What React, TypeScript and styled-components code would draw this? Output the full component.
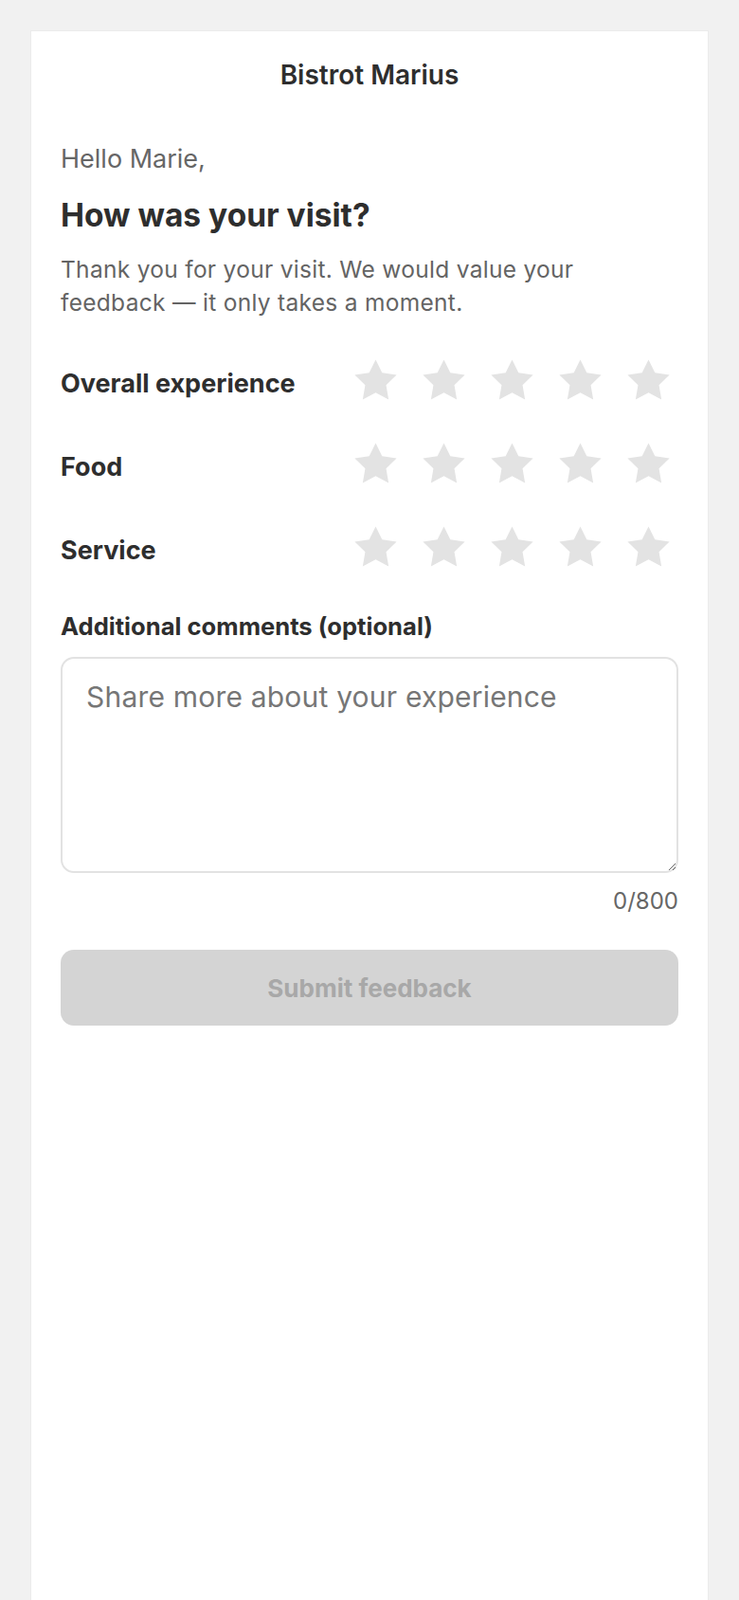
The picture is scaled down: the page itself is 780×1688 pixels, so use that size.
import React, {useState} from 'react';
import styled, {createGlobalStyle} from 'styled-components';

const GlobalStyle = createGlobalStyle`
  * { box-sizing: border-box; }
  body {
    margin: 0;
    background: #f1f1f1;
    font-family: Inter, "Noto Sans", "Liberation Sans", sans-serif;
    color: #2e2e2e;
  }
`;

const Page = styled.div`
  padding: 32px 32px 0;
  min-height: 100vh;
`;

const Card = styled.main`
  max-width: 716px;
  margin: 0 auto;
  min-height: calc(100vh - 32px);
  background: #fff;
  border: 1px solid #ebebeb;
  border-bottom: none;
`;

const Header = styled.header`
  padding: 28px 0 0;
  text-align: center;
  font-size: 28px;
  line-height: 36px;
  font-weight: 600;
  color: #2e2e2e;
`;

const Body = styled.section`
  padding: 53px 31px 0;
`;

const Greeting = styled.p`
  margin: 0;
  font-size: 27px;
  line-height: 36px;
  color: #666;
`;

const Title = styled.h1`
  margin: 21px 0 0;
  font-size: 33.5px;
  line-height: 40px;
  font-weight: 700;
  color: #2e2e2e;
`;

const Intro = styled.p`
  margin: 20px 0 0;
  max-width: 630px;
  font-size: 24.5px;
  line-height: 35px;
  letter-spacing: 0.3px;
  color: #646464;
`;

const Ratings = styled.div`
  margin-top: 32px;
  display: flex;
  flex-direction: column;
  gap: 24px;
`;

const RatingRow = styled.div`
  display: flex;
  align-items: center;
  justify-content: space-between;
  height: 64px;
`;

const RatingLabel = styled.span`
  font-size: 27px;
  font-weight: 700;
  color: #2e2e2e;
  padding-top: 6px;
`;

const Stars = styled.div`
  display: flex;
  gap: 8px;
`;

const StarButton = styled.button<{$on: boolean}>`
  width: 64px;
  height: 64px;
  padding: 0;
  border: none;
  background: none;
  display: flex;
  align-items: center;
  justify-content: center;
  cursor: pointer;
  color: ${p => (p.$on ? '#f2b01e' : '#e3e3e3')};
  svg { display: block; }
`;

const FieldLabel = styled.label`
  display: block;
  margin-top: 36px;
  font-size: 25.6px;
  line-height: 32px;
  font-weight: 700;
  color: #2e2e2e;
`;

const Comments = styled.textarea`
  display: block;
  width: 100%;
  height: 228px;
  margin-top: 16px;
  padding: 20px 25px;
  border: 2px solid #e2e2e2;
  border-radius: 14px;
  font-family: inherit;
  font-size: 30px;
  line-height: 40px;
  letter-spacing: 0.2px;
  color: #2e2e2e;
  outline: none;
  resize: vertical;
  &::placeholder { color: #767676; }
`;

const Counter = styled.div`
  margin-top: 16px;
  text-align: right;
  font-size: 24px;
  line-height: 28px;
  color: #666;
`;

const Submit = styled.button`
  display: block;
  width: 100%;
  height: 80px;
  margin-top: 37px;
  border: none;
  border-radius: 14px;
  background: #d4d4d4;
  color: #a8a8a8;
  font-family: inherit;
  font-size: 26px;
  font-weight: 700;
  cursor: not-allowed;
`;

const Star = () => (
  <svg width="53" height="53" viewBox="0 0 24 24" fill="currentColor">
    <polygon points="12,2 15.09,8.26 22,9.27 17,14.14 18.18,21.02 12,17.77 5.82,21.02 7,14.14 2,9.27 8.91,8.26" />
  </svg>
);

const categories = ['Overall experience', 'Food', 'Service'];

export default function App() {
  const [scores, setScores] = useState<Record<string, number>>({});
  const [text, setText] = useState('');
  const done = categories.every(c => scores[c]);

  return (
    <Page>
      <GlobalStyle />
      <Card>
        <Header>Bistrot Marius</Header>
        <Body>
          <Greeting>Hello Marie,</Greeting>
          <Title>How was your visit?</Title>
          <Intro>Thank you for your visit. We would value your feedback — it only takes a moment.</Intro>

          <Ratings>
            {categories.map(c => (
              <RatingRow key={c}>
                <RatingLabel>{c}</RatingLabel>
                <Stars>
                  {[1, 2, 3, 4, 5].map(n => (
                    <StarButton
                      key={n}
                      $on={(scores[c] || 0) >= n}
                      aria-label={`${n} star`}
                      onClick={() => setScores({...scores, [c]: n})}
                    >
                      <Star />
                    </StarButton>
                  ))}
                </Stars>
              </RatingRow>
            ))}
          </Ratings>

          <FieldLabel htmlFor="comments">Additional comments (optional)</FieldLabel>
          <Comments
            id="comments"
            placeholder="Share more about your experience"
            maxLength={800}
            value={text}
            onChange={e => setText(e.target.value)}
          />
          <Counter>{text.length}/800</Counter>
          <Submit disabled={!done}>Submit feedback</Submit>
        </Body>
      </Card>
    </Page>
  );
}
